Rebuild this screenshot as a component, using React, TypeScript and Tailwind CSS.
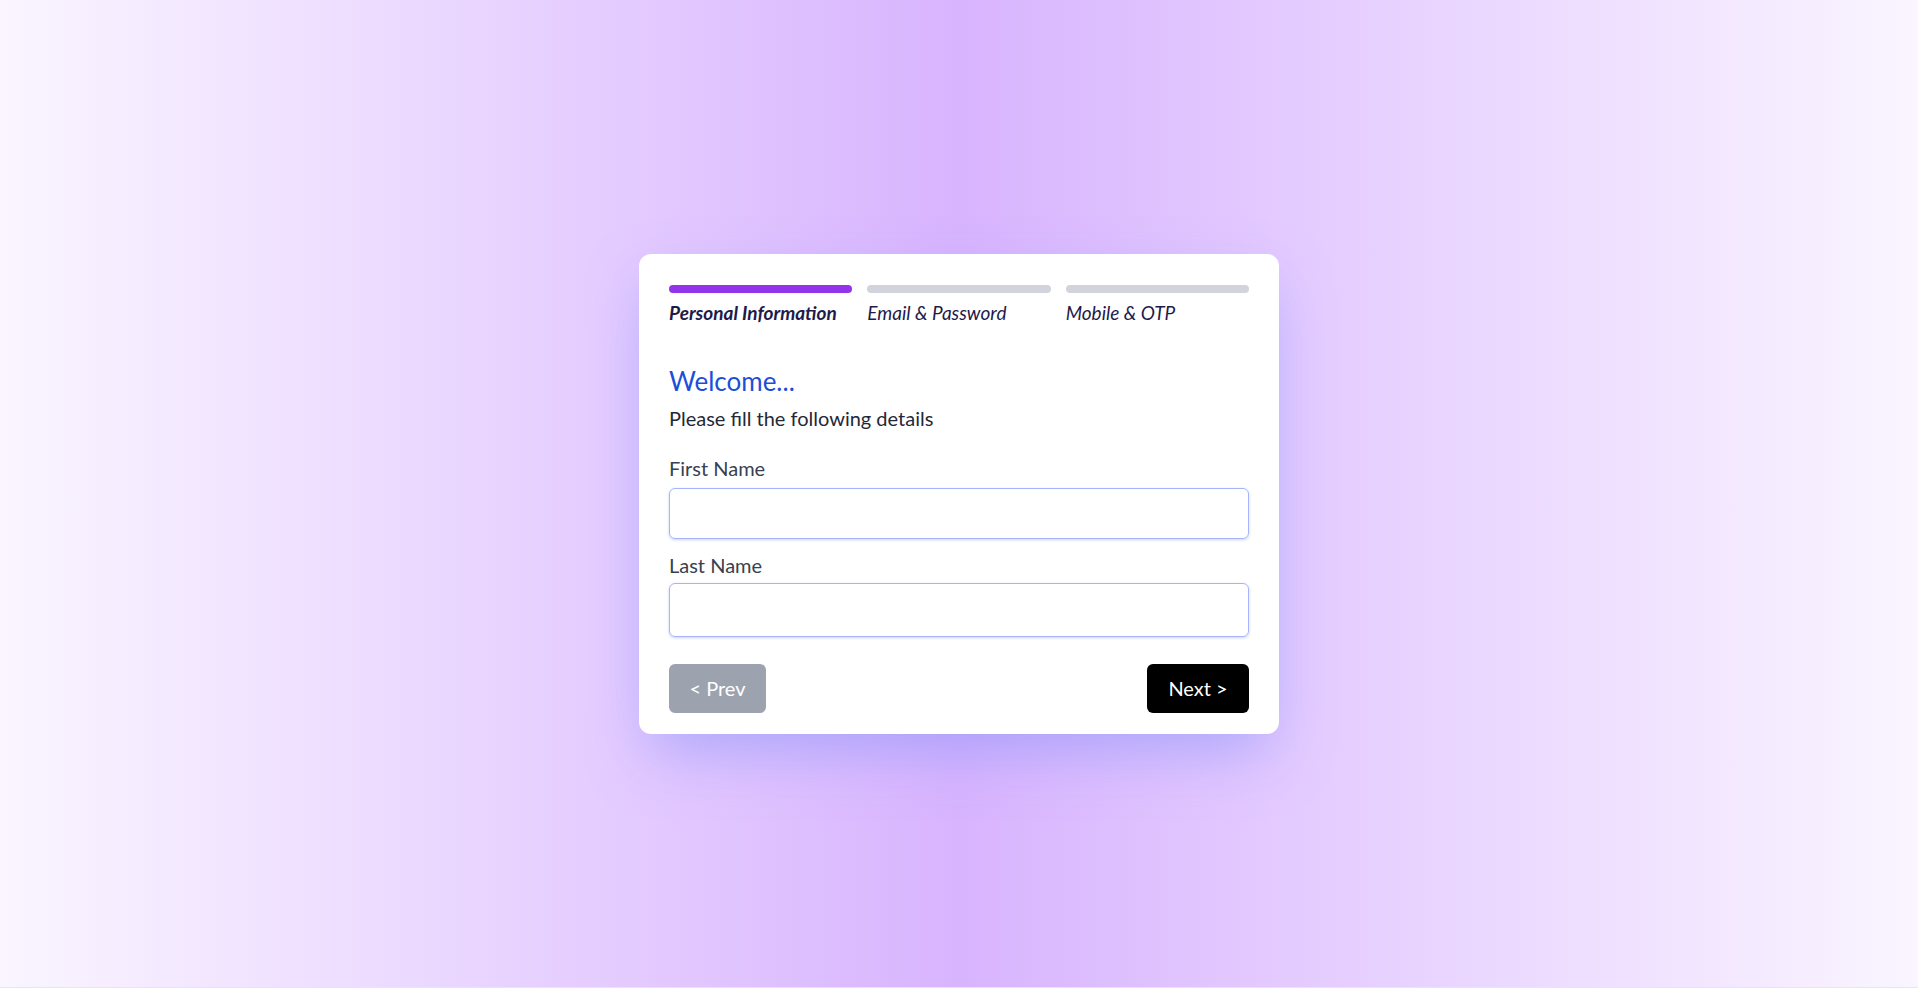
import { useState } from "react";

const steps = ["Personal Information", "Email & Password", "Mobile & OTP"];

export default function App() {
  const [step] = useState(0);
  const [firstName, setFirstName] = useState("");
  const [lastName, setLastName] = useState("");

  return (
    <div className="bg-gray-200 pb-px">
      <div
        className="h-[987px] flex items-center justify-center bg-gradient-to-r from-[#faf5ff] via-[#d8b4fe] to-[#faf5ff]"
        style={{ fontFamily: "Lato, 'Open Sans', sans-serif" }}
      >
        <div className="w-[640px] bg-white rounded-xl px-[30px] pt-[31px] pb-[21px] shadow-[0_25px_60px_-10px_rgba(129,140,248,0.55)]">
          {/* Stepper */}
          <div className="grid grid-cols-3 gap-[15px]">
            {steps.map((label, i) => (
              <div key={label} className="flex flex-col">
                <div
                  className={
                    i === step
                      ? "h-2 rounded-full bg-[#9333ea]"
                      : "h-2 rounded-full bg-[#d1d5db]"
                  }
                />
                <span
                  className={
                    i === step
                      ? "mt-2 text-[19px] leading-6 italic font-bold text-[#1e1b4b] whitespace-nowrap"
                      : "mt-2 text-[19px] leading-6 italic text-[#1e1b4b] whitespace-nowrap"
                  }
                >
                  {label}
                </span>
              </div>
            ))}
          </div>

          {/* Heading */}
          <h1 className="mt-10 text-[26px] leading-8 text-[#1d4ed8]">Welcome...</h1>
          <p className="mt-[7px] text-[20px] leading-7 text-[#1f2937]">
            Please fill the following details
          </p>

          {/* Fields */}
          <label className="block mt-[22px] text-[20px] leading-7 text-[#374151]">
            First Name
          </label>
          <input
            value={firstName}
            onChange={(e) => setFirstName(e.target.value)}
            className="mt-1.5 block w-full h-[51px] rounded-md border border-[#a5b4fc] px-3 text-lg outline-none shadow-[0_1px_3px_rgba(165,180,252,0.6)]"
          />

          <label className="block mt-3 text-[20px] leading-7 text-[#374151]">
            Last Name
          </label>
          <input
            value={lastName}
            onChange={(e) => setLastName(e.target.value)}
            className="mt-1 block w-full h-[54px] rounded-md border border-[#a5b4fc] px-3 text-lg outline-none shadow-[0_1px_3px_rgba(165,180,252,0.6)]"
          />

          {/* Actions */}
          <div className="mt-[27px] flex justify-between">
            <button className="h-[49px] w-[97px] rounded-md bg-[#9ca3af] text-white text-[20px]">
              &lt; Prev
            </button>
            <button className="h-[49px] w-[102px] rounded-md bg-black text-white text-[20px]">
              Next &gt;
            </button>
          </div>
        </div>
      </div>
    </div>
  );
}
